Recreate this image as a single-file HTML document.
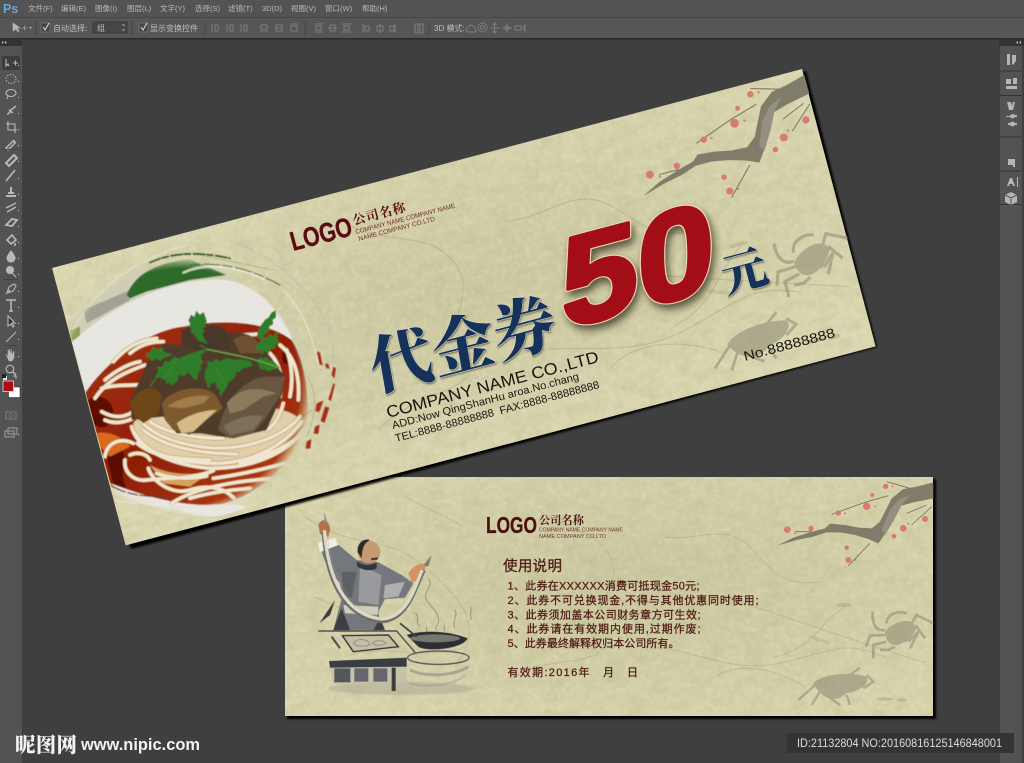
<!DOCTYPE html>
<html lang="zh"><head><meta charset="utf-8"><title>代金券</title>
<style>html,body{margin:0;padding:0;background:#3f3f3f;width:1024px;height:763px;overflow:hidden}svg{display:block}text{font-family:"Liberation Sans","Noto Sans CJK SC",sans-serif}.s{font-family:"Liberation Serif","Noto Serif CJK SC",serif}.m{fill:#b9b9b9;font-size:7.5px}.o{fill:#bdbdbd;font-size:8px}</style></head>
<body>
<svg width="1024" height="763" viewBox="0 0 1024 763" xmlns="http://www.w3.org/2000/svg">
<defs>
<filter id="paper" x="0" y="0" width="100%" height="100%"><feTurbulence type="fractalNoise" baseFrequency=".05 .09" numOctaves="5" seed="4"/><feColorMatrix values="0 0 0 0 .42 0 0 0 0 .41 0 0 0 0 .20 0 0 0 1.3 -.47"/></filter>
<filter id="paper2" x="0" y="0" width="100%" height="100%"><feTurbulence type="fractalNoise" baseFrequency=".18" numOctaves="3" seed="8"/><feColorMatrix values="0 0 0 0 1 0 0 0 0 1 0 0 0 0 .85 0 0 0 1.6 -.65"/></filter>
<filter id="b3"><feGaussianBlur stdDeviation="2.5"/></filter>
<filter id="b1"><feGaussianBlur stdDeviation="1"/></filter>
<filter id="b05" x="-5%" y="-5%" width="110%" height="110%"><feGaussianBlur stdDeviation=".5"/></filter>
<filter id="ds" x="-20%" y="-20%" width="150%" height="150%"><feDropShadow dx="3" dy="5" stdDeviation="4" flood-color="#2c2414" flood-opacity=".7"/></filter>
<filter id="ds2" x="-20%" y="-20%" width="150%" height="150%"><feDropShadow dx="1" dy="1.5" stdDeviation=".7" flood-color="#3a3420" flood-opacity=".5"/></filter>
<radialGradient id="mott" cx=".52" cy=".45" r=".62"><stop offset="0" stop-color="#a8a479" stop-opacity=".28"/><stop offset="1" stop-color="#a8a479" stop-opacity="0"/></radialGradient>
<radialGradient id="fade" gradientUnits="userSpaceOnUse" cx="395" cy="470" r="470"><stop offset=".755" stop-color="#fff"/><stop offset=".83" stop-color="#000"/></radialGradient>
<mask id="foodmask" maskUnits="userSpaceOnUse" x="0" y="0" width="900" height="960"><rect width="900" height="960" fill="url(#fade)"/></mask>
<linearGradient id="soup" x1="0" y1="0" x2="1" y2="1"><stop offset="0" stop-color="#a8340c"/><stop offset=".5" stop-color="#8f1f06"/><stop offset="1" stop-color="#bd4510"/></linearGradient>
<g id="veins" fill="none" stroke="#a09b70" stroke-width="1.1" opacity=".38">
<path d="M20 40C70 75 100 55 140 90S200 150 170 190"/><path d="M250 30c30 25 60 20 75 50s-20 45-10 70"/><path d="M380 60c30 5 60-15 85 10s30 40 70 35"/><path d="M60 180c40-15 80 5 120-10"/><path d="M350 170c50-5 90 30 150 15s60-20 100-5"/><path d="M440 120l120 40 80 26"/><path d="M120 20l60 30"/><path d="M520 210c-30-20-70-25-90-10"/><path d="M30 120l70 30"/><path d="M230 200c30-20 60-10 85-25"/><path d="M560 130c-30 20-30 40-70 50"/>
</g>
<g id="branch" transform="translate(485 -2) scale(.3333)" filter="url(#b05)">
<path fill="#807b6a" d="M22 212L70 188 120 172 165 160 180 146 225 150 265 158 305 160 330 140 350 100 365 70 400 42 440 35 490 22V70L430 82 385 95 370 130 350 170 325 205 295 192 255 180 210 172 170 172 130 185 80 195Z"/>
<path fill="#949080" d="M335 165L360 105 385 75 420 60 395 90 372 135 345 180Z"/>
<g fill="none" stroke="#77735f" stroke-width="2.5"><path d="M185 118L285 82 355 62"/><path d="M235 272L300 205"/><path d="M410 115L470 90"/><path d="M425 150L485 95"/><path d="M350 20L420 40"/><path d="M75 170H125"/></g>
<g fill="#d97a6e"><circle cx="52" cy="164" r="10"/><circle cx="123" cy="160" r="8"/><circle cx="205" cy="114" r="8"/><circle cx="290" cy="94" r="11"/><circle cx="307" cy="60" r="6"/><circle cx="347" cy="34" r="8"/><circle cx="400" cy="160" r="10"/><circle cx="465" cy="132" r="9"/><circle cx="372" cy="184" r="7"/><circle cx="230" cy="218" r="7"/><circle cx="235" cy="255" r="9"/><circle cx="75" cy="175" r="3"/><circle cx="225" cy="115" r="3"/><circle cx="316" cy="94" r="3"/><circle cx="415" cy="146" r="3"/><circle cx="368" cy="34" r="3"/><circle cx="257" cy="255" r="3"/></g>
</g>
<g id="crabs" transform="translate(485 -2) scale(.3333)" fill="#8f8c76" stroke="#8f8c76" opacity=".58" filter="url(#b05)">
<path stroke="none" d="M345 470C370 440 410 430 430 445S425 490 395 505 345 500 345 470Z"/>
<g fill="none" stroke-width="8"><path d="M350 480L300 482 288 515"/><path d="M350 500L310 510 310 550"/><path d="M375 515L355 525H330"/><path d="M405 500L440 455 465 490"/><path d="M425 445L440 420 490 445"/><path d="M415 500L445 470 420 520"/><path d="M345 465C320 470 305 450 308 410"/><path d="M350 445C350 420 380 405 410 415"/></g>
<path stroke="none" d="M130 625C160 595 240 590 290 605 300 625 270 650 230 655 190 690 150 665 130 625Z"/>
<g fill="none" stroke-width="7"><path d="M135 630L85 675"/><path d="M150 650L125 690"/><path d="M175 665L210 690"/><path d="M230 660L240 690"/><path d="M280 640L310 620 290 600"/><path d="M240 600L270 578"/></g>
<ellipse stroke="none" cx="345" cy="672" rx="25" ry="5" opacity=".6"/><ellipse stroke="none" cx="395" cy="675" rx="15" ry="6" opacity=".6"/><ellipse stroke="none" cx="222" cy="390" rx="24" ry="6" opacity=".5"/><ellipse stroke="none" cx="150" cy="495" rx="34" ry="5" transform="rotate(20 150 495)" opacity=".4"/>
</g>
<g id="nd" fill="none" stroke-linecap="round">
<path d="M245 590C260 650 330 690 470 700 600 705 700 650 755 575"/><path d="M255 610C290 670 370 705 480 715 610 715 710 670 760 600"/><path d="M270 570C310 620 400 650 500 655 600 655 700 620 750 560"/><path d="M300 575C350 610 440 625 520 625"/><path d="M262 640C320 690 410 685 480 690"/><path d="M280 600C340 650 450 672 560 672"/>
<path d="M225 690C220 730 255 755 290 750 350 745 440 745 490 722"/><path d="M295 715C310 760 370 795 420 780 470 765 520 770 552 805"/><path d="M365 820C430 775 560 750 690 745"/><path d="M490 745C570 735 650 715 745 690"/><path d="M570 700C650 680 730 640 770 600"/><path d="M240 675C260 665 290 670 300 690"/><path d="M320 730C360 745 420 750 470 738"/><path d="M420 805C470 790 540 780 600 775"/>
<path d="M135 505C170 450 230 425 285 405"/><path d="M155 475C210 460 260 470 310 460"/><path d="M165 450C200 420 240 400 270 395"/><path d="M155 545C190 565 220 565 250 545"/><path d="M165 570C200 585 230 575 260 560"/><path d="M165 680C170 640 210 620 250 640"/><path d="M190 395C230 350 270 330 320 325"/><path d="M240 370C270 345 300 335 340 335"/>
<path d="M690 345C735 380 750 440 745 510"/><path d="M710 360C725 400 730 450 720 500"/><path d="M540 318L630 312"/><path d="M700 520C690 560 670 590 650 600"/><path d="M660 370C690 400 700 450 690 500"/>
</g>
<clipPath id="c1"><path d="M52 268L802 69 874 343 127 545Z"/></clipPath>
</defs>

<rect width="1024" height="763" fill="#3f3f3f"/>
<rect x="0" y="39" width="22" height="724" fill="#535353"/>
<rect x="1000" y="39" width="22" height="724" fill="#535353"/>

<!-- card 2 -->
<rect x="287" y="479" width="649" height="240" fill="#000" filter="url(#b1)"/>
<g transform="translate(285 477)">
<rect width="648" height="239" fill="#d6d3ac"/>
<rect width="648" height="239" fill="url(#mott)"/>
<use href="#veins"/>
<rect width="648" height="239" filter="url(#paper)" opacity=".35"/>
<rect width="648" height="239" filter="url(#paper2)" opacity=".22"/>
<use href="#branch"/><use href="#crabs"/>
</g>
<!-- chef -->
<g transform="translate(285 475) scale(.3333)" filter="url(#b05)">
<ellipse cx="350" cy="640" rx="220" ry="20" fill="#a5a290" opacity=".45" filter="url(#b3)"/>
<path d="M110 230L155 205 215 255 280 262 350 300 385 325 360 368 300 372 280 410 290 465 145 465 170 370 165 325C135 290 118 260 110 230Z" fill="#74777b"/>
<path d="M225 270L290 300 280 390 220 380Z" fill="#989a9b"/><path d="M300 330L360 320 340 365 295 370Z" fill="#aeb0af"/><path d="M170 290L215 290 200 370 175 360Z" fill="#5d6065"/>
<path d="M215 258C230 270 255 275 275 262L275 280C255 290 235 285 217 275Z" fill="#33343a"/>
<path d="M175 390L280 395 278 420 180 415Z" fill="#cfcdbd"/>
<path d="M145 465L170 400 195 465ZM285 430L300 465H265Z" fill="#3c3d42"/>
<path d="M103 445L150 375 135 420Z" fill="#3b3b3f"/>
<circle cx="252" cy="231" r="34" fill="#c69a72"/><path d="M218 232C215 200 240 190 255 195 235 205 232 220 230 250Z" fill="#2e2c2c"/><path d="M258 250l22-3-4 7-16 2z" fill="#3a3532"/>
<path d="M100 150C110 125 135 135 135 165L130 185 105 178Z" fill="#b4704c"/><path d="M118 110l8 30-8 4z" fill="#8c8d8d"/>
<path d="M98 205L150 188 160 210 105 232Z" fill="#efeee2"/>
<path d="M370 295C385 270 410 260 425 270L405 315 380 322Z" fill="#d69066"/><path d="M415 270l25-30-10 35z" fill="#8a7a6c"/>
<path d="M116 170C123 300 168 424 290 439 372 434 392 330 417 285" fill="none" stroke="#6d6d65" stroke-width="12"/>
<path d="M118 165C128 300 175 420 290 432 370 428 390 330 412 285" fill="none" stroke="#dcdac6" stroke-width="10"/>
<path d="M125 170C140 300 190 410 290 428" fill="none" stroke="#a5a496" stroke-width="1"/>
<path d="M100 468H335L390 532" fill="none" stroke="#4a4a4c" stroke-width="4"/>
<path d="M172 482L310 480 340 515 205 530Z" fill="#c3c0a3" stroke="#2e2e32" stroke-width="4"/>
<path d="M205 505c10-18 45-14 50 3-10 8-40 8-50-3zM262 505c10-12 35-10 40 0-12 8-32 8-40 0z" fill="none" stroke="#777" stroke-width="2"/>
<path d="M140 485l25 35" stroke="#4a4a48" stroke-width="6"/>
<path d="M132 558L365 548V575L135 578Z" fill="#3b3b42"/>
<path d="M135 578H365L365 640 145 628Z" fill="#bfbda6" opacity=".7"/>
<rect x="148" y="580" width="48" height="42" fill="#55555c"/><rect x="208" y="580" width="42" height="40" fill="#66666c"/><rect x="265" y="580" width="42" height="40" fill="#66666c"/><rect x="320" y="578" width="12" height="70" fill="#3d3d40"/>
<path d="M365 480C420 462 500 470 548 490 530 525 420 530 400 515Z" fill="#2d2d33"/>
<ellipse cx="450" cy="490" rx="75" ry="12" fill="#77776f"/>
<path d="M345 445l50 40" stroke="#3a3a40" stroke-width="5"/>
<ellipse cx="460" cy="548" rx="92" ry="20" fill="none" stroke="#55555c" stroke-width="4"/>
<path d="M375 585C430 610 510 600 550 575" fill="none" stroke="#8a8a84" stroke-width="9" opacity=".6"/>
<path d="M372 625C430 640 510 630 540 600" fill="none" stroke="#8a8a84" stroke-width="6" opacity=".35"/>
<g fill="none" stroke="#8b8a7a" stroke-width="2.5"><path d="M430 310c20 20-20 40-5 65s30 30 35 55-15 25-5 35"/><path d="M390 415c20 10-5 25 15 40"/><path d="M510 405c10 20-10 30 0 55"/><path d="M555 395c10 15-5 20 5 40"/><path d="M478 450v20"/><path d="M425 455v15"/></g>
</g>
<!-- card 2 text -->
<g fill="#4e1a14">
<text x="486" y="533" font-weight="bold" font-size="23" fill="#4a1010" stroke="#4a1010" stroke-width=".3" textLength="51" lengthAdjust="spacingAndGlyphs">LOGO</text>
<text class="s" x="539" y="524" font-size="11.2" font-weight="bold" textLength="45" lengthAdjust="spacing">公司名称</text>
<text x="539" y="531.5" font-size="5.8" fill="#6b3a30" textLength="84" lengthAdjust="spacingAndGlyphs">COMPANY NAME COMPANY NAME</text>
<text x="539" y="538" font-size="5.8" fill="#6b3a30" textLength="67" lengthAdjust="spacingAndGlyphs">NAME COMPANY CO.LTD</text>
<text x="503" y="571" font-size="14.5" stroke="#4e1a14" stroke-width=".3" textLength="59" lengthAdjust="spacing">使用说明</text>
<g font-size="11" stroke="#4e1a14" stroke-width=".25">
<text x="507.5" y="589.5" textLength="192" lengthAdjust="spacing">1、此券在XXXXXX消费可抵现金50元;</text>
<text x="507.5" y="604" textLength="251" lengthAdjust="spacing">2、此券不可兑换现金,不得与其他优惠同时使用;</text>
<text x="507.5" y="618.5" textLength="193" lengthAdjust="spacing">3、此券须加盖本公司财务章方可生效;</text>
<text x="507.5" y="632.5" textLength="193" lengthAdjust="spacing">4、此券请在有效期内使用,过期作废;</text>
<text x="507.5" y="647" textLength="172" lengthAdjust="spacing">5、此券最终解释权归本公司所有。</text>
<text x="507.5" y="676" textLength="82" lengthAdjust="spacing">有效期:2016年</text>
<text x="603" y="676">月</text><text x="627" y="676">日</text>
</g></g>

<!-- card 1 -->
<path d="M55 272L806 71 877 347 131 549Z" fill="#000" filter="url(#b1)"/>
<g transform="translate(52 268) rotate(-14.86)">
<rect width="776" height="287" fill="#d9d6b0"/>
<rect width="776" height="287" fill="url(#mott)"/>
<g transform="scale(1.198)"><use href="#veins"/></g>
<rect width="776" height="287" filter="url(#paper)" opacity=".35"/>
<rect width="776" height="287" filter="url(#paper2)" opacity=".22"/>
<g transform="scale(1.198)"><use href="#branch"/><use href="#crabs"/></g>
</g>

<!-- food photo -->
<g clip-path="url(#c1)"><g filter="url(#b05)"><g transform="translate(50 230) scale(.3333)">
<g mask="url(#foodmask)">
<path d="M40 340L110 180C200 90 400 60 540 130L800 330 800 700 400 860 200 800Z" fill="#d0cdb6"/>
<path d="M100 240L240 180 240 210 110 280Z" fill="#a3a196"/>
<path d="M230 195C260 120 340 95 420 88L530 135 420 150 290 185 240 205Z" fill="#2e6a2a"/>
<path d="M60 300l30-10 0 30-25 12z" fill="#8e9b52"/>
<path d="M65 340C150 250 330 150 500 148 600 148 680 220 725 320L780 600 560 860 380 850 200 800Z" fill="#e8e6e0"/>
<path d="M105 490C170 390 300 300 400 290 500 268 650 270 725 330 770 400 780 520 770 600 720 720 600 810 500 825 380 830 260 790 180 760Z" fill="url(#soup)"/>
<g fill="#5b0a02"><path d="M115 510C140 490 180 500 190 540 190 580 160 610 130 580Z"/><path d="M170 680C200 640 230 670 220 720 210 770 260 790 190 760Z"/><ellipse cx="200" cy="680" rx="22" ry="30"/><ellipse cx="710" cy="380" rx="14" ry="22"/></g>
<path d="M140 610C170 600 220 620 240 650L180 680 150 650Z" fill="#d9691c"/>
<path d="M250 580C260 660 340 700 470 710 600 715 720 650 755 580 740 500 300 500 250 580Z" fill="#e0cfa8"/>
<path d="M300 705C360 740 450 735 490 720L420 770 340 760Z" fill="#d9a25a"/>
<use href="#nd" stroke="#a8702e" stroke-width="13"/>
<use href="#nd" stroke="#f0e6cf" stroke-width="10.500"/>
<path d="M395 310C430 280 520 270 535 310 590 300 640 330 650 370L705 440 700 480 690 510 650 600 550 625 450 610 380 610 340 560 245 570 240 510 275 440 290 400 340 340 395 345Z" fill="#4f3b29"/>
<path d="M335 520C370 470 470 460 500 500L518 535 440 590 420 615 370 600 345 570Z" fill="#7d5a2e"/>
<path d="M350 530c30-20 80-40 130-30l-20 20-60 15z" fill="#a07d4c"/>
<path d="M380 580C420 550 470 540 500 540L430 605 395 610Z" fill="#d6ba86"/>
<path d="M240 520C265 470 320 460 335 500L325 550 280 580 250 555Z" fill="#6e4718"/>
<path d="M510 580C530 510 580 450 640 440L705 440 695 490 650 560 610 610 540 625 505 600Z" fill="#67563f"/>
<path d="M530 520C570 470 620 470 680 490L640 500 580 540 540 550Z" fill="#8d7a5d"/>
<path d="M520 590C560 560 610 550 640 560L610 600 540 615Z" fill="#7e6f58"/>
<path d="M395 300C440 280 510 280 530 310L540 360 440 360 395 345Z" fill="#4a372a"/>
<path d="M550 330C590 300 630 320 630 370L570 370Z" fill="#705030"/>
<g fill="#2f7d2c">
<path d="M415 272l8-18 10 6 6-18 10 12 12-8 6 16 4 14-8 6 6 10-12 2 8 14-10 0 10 22 10 12-30-10-16-22-8-2 4-12-10-6 6-8z"/>
<path d="M620 320l8-28 18-24 10-6 8-14 14-8 0 22-10 8 2 12-12 8 0 12-14 12-14 14z"/>
<path d="M620 345l12-10 6-16 12 6 8-14 10 10 14-20 0 28 6 8-12 8 0 10-14 2-6 14-12-8-8 12-8-16-10 2z"/>
<path d="M288 372l16-8 4-14 14 8 14-6 6 14 28 8-24 8-16 10-12-6-12 8-8-12-10 0z"/>
<path d="M315 440l10-16-4-14 16 0 8-18 12 4 16-16 14 6 30-14 40-12 16 0-20 14 0 14 8 8-10 10 2 14-10 8 0 18-8 4-12-14-10-10-10 12-14-4-8 20-14 12-8-8-10 4-2-14-10-2z"/>
<path d="M465 422l10-14-6-14 18 2 10-8 14 6 20-10 20 6 30-2 20 6 6 14-16 4-10 2-14 12-8 0-6 18-16 12-16 30-12 14 0-22-8-2-4-20-14 6-10 16-2-18-6-12z"/>
<path d="M620 392l12-10 10 4 6-6 10 10 14 4 18 20-22 4-10 6-14-6-12 0z"/>
</g>
<path d="M470 358C530 370 620 385 690 415" stroke="#6aa63f" stroke-width="4" fill="none"/>
<path d="M450 345L470 358M300 470L320 440M380 390L340 450M500 420L530 470" stroke="#4a8a2e" stroke-width="2.500" fill="none"/>
<path d="M385 838C450 860 500 870 590 830L620 815 400 830Z" fill="#e8e6e0"/>
</g>
<path d="M385 838C450 865 500 872 590 832L560 822 420 832Z" fill="#e8e6e0"/>
<g fill="none" stroke-linecap="round">
<path d="M300 98C380 60 470 70 540 85" stroke="#32572c" stroke-width="5" stroke-dasharray="34 6 18 9"/>
<path d="M400 128C470 95 570 110 640 148" stroke="#e8e6d2" stroke-width="7" opacity=".85"/>
<path d="M420 105C520 95 610 120 690 165" stroke="#3c6c33" stroke-width="3" stroke-dasharray="30 10 50 7"/>
<path d="M560 40C670 80 790 180 835 290 850 330 850 380 845 400" stroke="#b9bdb5" stroke-width="4" stroke-dasharray="60 14 100 8" opacity=".75"/>
<path d="M700 180C760 240 790 330 805 400" stroke="#eeeee0" stroke-width="3" opacity=".8"/>
<path d="M70 300C130 180 250 90 410 45" stroke="#efefe6" stroke-width="3" opacity=".6"/>
<path d="M180 765C230 795 280 800 350 800" stroke="#6a3a2c" stroke-width="4" stroke-dasharray="50 8 30 6"/>
<path d="M190 810C250 820 320 825 380 825" stroke="#f0efe0" stroke-width="3" opacity=".7"/>
</g>
<g fill="#a82d1a"><path d="M800 365l10 2 8 40-10-5z"/><path d="M825 400l10 2 4 15-10-3z"/><path d="M850 410l8 5-5 30-8-10z"/><path d="M850 460l5 3-12 50-8-5z"/><path d="M800 520l20-8-12 34-12-3z"/><path d="M825 530l13 3-14 46-12-6z"/><path d="M795 590l14-6-4 28-14-1z"/><path d="M770 635l14-8-3 28-14 2z"/></g>
</g></g></g>

<!-- card 1 text -->
<text transform="translate(293 251) rotate(-14.86)" font-weight="bold" font-size="27" fill="#5a0b12" stroke="#5a0b12" stroke-width=".4" textLength="63" lengthAdjust="spacingAndGlyphs">LOGO</text>
<text class="s" transform="translate(354 225) rotate(-14.86)" font-size="13" font-weight="bold" fill="#5a1015" textLength="54" lengthAdjust="spacing">公司名称</text>
<text transform="translate(356 234) rotate(-14.86)" font-size="6.6" fill="#70302a" textLength="103" lengthAdjust="spacingAndGlyphs">COMPANY NAME COMPANY NAME</text>
<text transform="translate(359 241) rotate(-14.86)" font-size="6.6" fill="#70302a" textLength="79" lengthAdjust="spacingAndGlyphs">NAME COMPANY CO.LTD</text>

<g filter="url(#ds2)"><text class="s" transform="translate(375 391) rotate(-14.86) skewX(-5)" font-size="63" font-weight="900" fill="#12305a" stroke="#f2efdf" stroke-width=".7" paint-order="stroke" textLength="190" lengthAdjust="spacing">代金券</text></g>
<g filter="url(#ds)"><g transform="translate(562 329) rotate(-14.86) skewX(-14)" font-size="124" font-weight="bold"><text fill="#ecd9b8" stroke="#ecd9b8" stroke-width="6" stroke-linejoin="round" textLength="158" lengthAdjust="spacingAndGlyphs">50</text><text fill="#a30d16" stroke="#a30d16" stroke-width="4" stroke-linejoin="round" textLength="158" lengthAdjust="spacingAndGlyphs">50</text></g></g>
<g filter="url(#ds2)"><text class="s" transform="translate(726 293) rotate(-14.86)" font-size="46" font-weight="900" fill="#12305a" stroke="#f2efdf" stroke-width=".6" paint-order="stroke">元</text></g>

<text transform="translate(388 418) rotate(-14.86)" font-size="16.5" fill="#151510" textLength="219" lengthAdjust="spacingAndGlyphs">COMPANY NAME CO.,LTD</text>
<text transform="translate(393 429) rotate(-14.86)" font-size="10.8" fill="#151510" textLength="193" lengthAdjust="spacingAndGlyphs">ADD:Now QingShanHu aroa.No.chang</text>
<text transform="translate(396 442) rotate(-14.86)" font-size="10.8" fill="#151510" xml:space="preserve" textLength="211" lengthAdjust="spacingAndGlyphs">TEL:8888-88888888  FAX:8888-88888888</text>
<text transform="translate(745 361) rotate(-14.86)" font-size="13.5" fill="#151510" textLength="94" lengthAdjust="spacingAndGlyphs">No.88888888</text>

<!-- top bars -->
<rect width="1024" height="18" fill="#535353"/>
<rect y="17" width="1024" height="1" fill="#464646"/>
<rect y="18" width="1024" height="20" fill="#565656"/>
<rect y="38" width="1024" height="1.5" fill="#2a2a2a"/>
<text x="3" y="13" font-size="12.5" font-weight="bold" fill="#6ea4d6">Ps</text>
<text class="m" x="28" y="11">文件(F)</text><text class="m" x="61" y="11">编辑(E)</text><text class="m" x="95" y="11">图像(I)</text><text class="m" x="127" y="11">图层(L)</text><text class="m" x="160" y="11">文字(Y)</text><text class="m" x="195" y="11">选择(S)</text><text class="m" x="228" y="11">滤镜(T)</text><text class="m" x="262" y="11">3D(D)</text><text class="m" x="291" y="11">视图(V)</text><text class="m" x="325" y="11">窗口(W)</text><text class="m" x="362" y="11">帮助(H)</text>

<g stroke="#484848" stroke-width="1"><path d="M36 21V36M132 21V36M205 21V36M305 21V36M429 21V36"/></g>
<path d="M13 23v8l3-2 2 3 1-1-2-3h3zM22 28h5M24.500 25.500v5" fill="#b5b5b5" stroke="#b5b5b5" stroke-width=".6"/><path d="M29 27l3 0-1.500 2z" fill="#b5b5b5"/>
<rect x="41" y="23" width="9" height="9" rx="1" fill="#444" stroke="#777" stroke-width=".7"/><path d="M43 27l2 3 4-7" fill="none" stroke="#ddd"/>
<text class="o" x="53" y="31">自动选择:</text>
<rect x="93" y="22" width="34" height="11" rx="1" fill="#474747" stroke="#3a3a3a"/><text class="o" x="97" y="31">组</text><path d="M122 25.500l1.500-1.500 1.500 1.500zM122 29.500l1.500 1.500 1.500-1.500z" fill="#bbb"/>
<rect x="139" y="23" width="9" height="9" rx="1" fill="#444" stroke="#777" stroke-width=".7"/><path d="M141 27l2 3 4-7" fill="none" stroke="#ddd"/>
<text class="o" x="150" y="31">显示变换控件</text>
<g fill="none" stroke="#7c7c7c" stroke-width="1.100">
<path d="M212 24v8M215 25h3v6h-3zM227 24v8M230 25h3v6h-3zM241 24v8M244 25h3v6h-3zM260 31h8M261 25h6v4h-6zM275 28h8M276 25h6v6h-6zM290 24h8M291 26h6v5h-6z"/>
<path d="M314 24h9M316 26h5v4h-5zM314 32h9M328 28h9M330 25h5v6h-5zM342 32h9M344 26h5v4h-5zM342 24h9"/>
<path d="M363 24v9M365 26h4v5h-4zM380 24v9M377 26h6v5h-6zM395 24v9M390 26h4v5h-4z"/>
<path d="M415 24h3v9h-3zM420 24h3v9h-3z"/>
</g>
<text class="o" x="434" y="31">3D 模式:</text>
<g fill="none" stroke="#7e7e7e" stroke-width="1"><path d="M466 30c0-3 3-3 4-5 3 0 5 2 5 3s2 3 0 4h-8z"/><circle cx="482.500" cy="27.500" r="4.500"/><circle cx="482.500" cy="27.500" r="2"/><path d="M494.500 23v10M490 28h10M492.500 25l2-2 2 2M492.500 31l2 2 2-2"/><path d="M507 23v10M502 28h10"/><circle cx="507" cy="28" r="2"/><path d="M515 26h6v4h-6zM523 28l2-3v6z"/></g>

<!-- left tool panel -->
<rect x="0" y="39" width="22" height="7" fill="#333"/>
<path d="M2 41l2 1.500-2 1.500zM5 41l2 1.500-2 1.500z" fill="#bbb"/>
<rect x="2" y="56" width="18" height="14" rx="1" fill="#3d3d3d"/>
<g fill="none" stroke="#b9b9b9" stroke-width="1.100">
<path d="M6 59v7l2-2 1 2M13 63h5M15.500 60.500v5" />
<ellipse cx="11" cy="79" rx="5" ry="4.500" stroke-dasharray="1.500 1.500"/>
<ellipse cx="11" cy="93" rx="5" ry="3.500"/><path d="M8 96l-1 3"/>
<path d="M7 114c3 0 3-3 4-4l5-4M9 110l4 3" stroke-width="1.500"/>
<path d="M8 121v9h9M6 124h9v9"/>
<path d="M6 148l7-7 2 2-7 7zM13 140l3 3" stroke-width="1.500"/>
<path d="M6 163l8-8 3 3-8 8z" stroke-width="2"/>
<path d="M6 181l9-11" stroke-width="1.600"/>
<path d="M6 196h10M8 193h6M11 187v6" stroke-width="2"/>
<path d="M6 208l10-5M7 212l9-5" stroke-width="1.500"/>
<path d="M6 225l6-6 5 1-5 6z" stroke-width="1.800"/>
<path d="M7 240l5-5 4 5-5 4zM15 243v3" stroke-width="1.600"/>
<path d="M11 251c-3 4-4 6-4 7a4 4 0 008 0c0-1-1-3-4-7z" fill="#b9b9b9"/>
<circle cx="10" cy="270" r="3.500" fill="#b9b9b9"/><path d="M12 273l4 4"/>
<path d="M7 293l2-6 5-3 2 2-3 5zM6 294l4-4"/>
<path d="M6 300h10M11 300v11M9 311h4" stroke-width="1.500"/>
<path d="M8 316v10l3-2 2 3 1-1-2-3h3z" fill="#333"/>
<path d="M6 342l10-10"/>
<path d="M6 354l2 3v-7l1 5v-6l2 6v-6l1 6 2-4v7l-2 3H9z" fill="#b9b9b9" stroke-width=".5"/>
<circle cx="10" cy="369" r="3.800"/><path d="M13 372l3 3" stroke-width="1.500"/>
<rect x="6" y="412" width="10" height="7" stroke="#777"/><circle cx="11" cy="415.500" r="1.800" stroke="#777"/>
<rect x="5" y="431" width="9" height="6" stroke="#999"/><rect x="8" y="428" width="9" height="6" stroke="#999"/>
</g>
<g fill="#ccc"><path d="M18 65h1v1h-1zM18 81h1v1h-1zM18 97h1v1h-1zM18 113h1v1h-1zM18 129h1v1h-1zM18 145h1v1h-1zM18 161h1v1h-1zM18 178h1v1h-1zM18 194h1v1h-1zM18 210h1v1h-1zM18 226h1v1h-1zM18 242h1v1h-1zM18 258h1v1h-1zM18 274h1v1h-1zM18 291h1v1h-1zM18 307h1v1h-1zM18 323h1v1h-1zM18 339h1v1h-1zM18 356h1v1h-1zM18 434h1v1h-1z"/></g>
<path d="M3 149.500h16M3 279.500h16M3 345.500h16" stroke="#464646"/>
<rect x="3" y="376" width="4" height="4" fill="#ddd"/><rect x="2" y="374" width="4" height="4" fill="#222"/>
<path d="M13 376l3 0 0 3" fill="none" stroke="#bbb"/>
<rect x="8.500" y="387" width="11.500" height="10.500" fill="#fff" stroke="#333" stroke-width=".6"/>
<rect x="3" y="381" width="10.500" height="10.500" fill="#b10c12" stroke="#ddd" stroke-width=".8"/>

<!-- right panel -->
<rect x="999" y="39" width="25" height="7" fill="#333"/>
<path d="M1018 41l-2 1.500 2 1.500zM1021 41l-2 1.500 2 1.500z" fill="#bbb"/>
<rect x="1022" y="46" width="2" height="717" fill="#3f3f3f"/>
<path d="M1000 71h22M1000 95.500h22M1000 137h22M1000 171h22M1000 204.500h22" stroke="#333"/>
<g fill="#b5b5b5"><rect x="1007" y="54" width="3" height="11"/><path d="M1012 55h4v6l-3 4-1-1z"/>
<rect x="1006" y="79" width="5" height="5"/><rect x="1013" y="78" width="4" height="6"/><rect x="1006" y="86" width="11" height="3"/>
<path d="M1007 102l2 8h4l2-8-2 0-1 4-1-4z"/><path d="M1006 116h4a3 3 0 015-1h2v2h-2a3 3 0 01-5 0h-4zM1008 123h2a3 3 0 015 0h2v2h-2a3 3 0 01-5 0h-2z"/>
<path d="M1007 186l3-8h2l3 8h-2l-.6-2h-2.800l-.6 2zM1017 177h1v10h-1z"/>
<path d="M1008 165v-6h7v8h-2v-2z"/><path d="M1005 195l6-3 6 3v7l-6 3-6-3z"/></g>
<path d="M1005 195l6 3 6-3M1011 198v7" stroke="#535353" fill="none"/>

<!-- watermark -->
<text class="s" x="15" y="752" font-size="20.500" font-weight="900" fill="#f2f2f2" textLength="62" lengthAdjust="spacing">昵图网</text>
<text x="81" y="750" font-size="16.500" font-weight="bold" fill="#f2f2f2" textLength="119" lengthAdjust="spacingAndGlyphs">www.nipic.com</text>
<rect x="787" y="733" width="227" height="20" fill="#343434"/>
<text x="797" y="747" font-size="12" fill="#dcdcdc" textLength="205" lengthAdjust="spacingAndGlyphs">ID:21132804 NO:20160816125146848001</text>
</svg>
</body></html>
